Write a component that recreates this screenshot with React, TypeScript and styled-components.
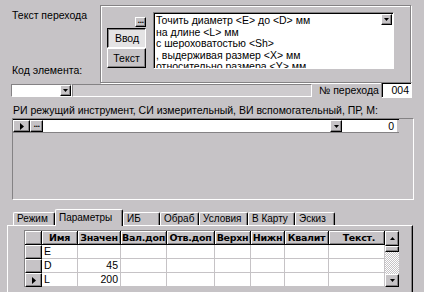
import React from "react";
import styled, { createGlobalStyle, css } from "styled-components";

const GRAY = "#c6c3c6";
const SHADOW = "#848284";
const FONT = `"Liberation Sans", Arial, sans-serif`;

const GlobalStyle = createGlobalStyle`
  html, body { margin: 0; padding: 0; background: ${GRAY}; }
  body { font-family: ${FONT}; font-size: 10.5px; }
`;

const raised = css`
  background: ${GRAY};
  border-top: 1px solid #fff;
  border-left: 1px solid #fff;
  border-right: 1px solid #000;
  border-bottom: 1px solid #000;
  box-shadow: inset -1px -1px 0 ${SHADOW};
`;

const sunken = css`
  border-top: 1px solid ${SHADOW};
  border-left: 1px solid ${SHADOW};
  border-right: 1px solid #fff;
  border-bottom: 1px solid #fff;
`;

const Screen = styled.div`
  width: 424px;
  height: 292px;
  overflow: hidden;
  background: ${GRAY};
  color: #000;
  display: flex;
  flex-direction: column;
  font-family: ${FONT};
  font-size: 10.5px;
  line-height: 13px;
`;

/* ---------- top area ---------- */
const TopArea = styled.div`
  display: flex;
  height: 83px;
  flex-shrink: 0;
`;

const LeftLabels = styled.div`
  width: 100px;
  box-sizing: border-box;
  padding: 9px 0 6px 12px;
  display: flex;
  flex-direction: column;
  justify-content: space-between;
  white-space: nowrap;
`;

const GroupPanel = styled.div`
  margin-top: 5px;
  width: 311px;
  height: 78px;
  box-sizing: border-box;
  border: 1px solid ${SHADOW};
  box-shadow: inset 1px 1px 0 #fff, 1px 1px 0 #fff;
  padding: 6px 0 0 6px;
  display: flex;
  align-items: flex-start;
`;

const ButtonsCol = styled.div`
  width: 39px;
  padding-top: 5px;
  display: flex;
  flex-direction: column;
  align-items: flex-end;
  gap: 1px;
`;

const ButtonStack = styled.div`
  display: flex;
  flex-direction: column;
`;

const DotsButton = styled.div<{ $w?: number; $h?: number }>`
  ${raised};
  box-sizing: border-box;
  width: ${(p) => p.$w ?? 11}px;
  height: ${(p) => p.$h ?? 10}px;
  display: flex;
  align-items: center;
  justify-content: center;
  font-family: "DejaVu Sans", sans-serif;
  font-size: 7px;
  font-weight: bold;
  line-height: 4px;
  letter-spacing: -0.6px;
  padding-bottom: 3px;
  overflow: hidden;
`;

const PushButton = styled.div<{ $down?: boolean }>`
  box-sizing: border-box;
  width: 39px;
  height: 20px;
  display: flex;
  align-items: center;
  justify-content: center;
  ${(p) =>
    p.$down
      ? css`
          background: #e4e3e4;
          border-top: 1px solid #000;
          border-left: 1px solid #000;
          border-right: 1px solid #fff;
          border-bottom: 1px solid #fff;
          box-shadow: inset 1px 1px 0 ${SHADOW};
          padding: 1px 0 0 1px;
        `
      : raised}
`;

const Memo = styled.div`
  margin-left: 7px;
  width: 241px;
  height: 57px;
  box-sizing: border-box;
  background: #fff;
  ${sunken};
  box-shadow: inset 1px 1px 0 #000;
  display: flex;
  overflow: hidden;
`;

const MemoText = styled.div`
  flex: 1;
  padding: 2px 0 0 2px;
  line-height: 11.6px;
  white-space: nowrap;
  overflow: hidden;
`;

const MemoSide = styled.div`
  width: 11px;
  padding: 1px 1px 0 0;
`;

const DropButton = styled.div<{ $w?: number; $h?: number }>`
  ${raised};
  box-sizing: border-box;
  width: ${(p) => p.$w ?? 11}px;
  height: ${(p) => p.$h ?? 11}px;
  display: flex;
  align-items: center;
  justify-content: center;
  flex-shrink: 0;
`;

/* ---------- row 2 ---------- */
const Row2 = styled.div`
  display: flex;
  align-items: center;
  height: 14px;
  padding: 0 12px 0 11px;
  flex-shrink: 0;
`;

const Combo = styled.div`
  width: 61px;
  height: 13px;
  box-sizing: border-box;
  background: #fff;
  ${sunken};
  display: flex;
  justify-content: flex-end;
`;

const GrayField = styled.div`
  width: 240px;
  height: 13px;
  box-sizing: border-box;
  ${sunken};
  background: #cecbce;
`;

const FieldLabel = styled.div`
  margin-left: 7px;
  white-space: nowrap;
`;

const NumBox = styled.div`
  margin-left: auto;
  width: 31px;
  height: 16px;
  box-sizing: border-box;
  background: #fff;
  ${sunken};
  box-shadow: inset 1px 1px 0 #000;
  text-align: right;
  padding: 1px 2px 0 0;
  line-height: 13px;
`;

/* ---------- tools ---------- */
const SectionLabel = styled.div`
  margin-top: 7px;
  padding-left: 13px;
  white-space: nowrap;
  flex-shrink: 0;
`;

const ToolPanel = styled.div`
  margin: 1px 0 0 12px;
  width: 402px;
  height: 82px;
  box-sizing: border-box;
  ${sunken};
  flex-shrink: 0;
`;

const ToolRow = styled.div`
  display: flex;
  height: 14px;
  box-sizing: border-box;
  border-top: 1px solid #000;
  border-bottom: 1px solid ${SHADOW};
  width: 386px;
`;

const IndicatorCell = styled.div<{ $w: number }>`
  ${raised};
  box-sizing: border-box;
  width: ${(p) => p.$w}px;
  height: 100%;
  display: flex;
  align-items: center;
  justify-content: center;
  flex-shrink: 0;
`;

const EditCell = styled.div<{ $w: number }>`
  width: ${(p) => p.$w}px;
  background: #fff;
  box-sizing: border-box;
  text-align: right;
  padding-right: 3px;
  line-height: 12px;
  flex-shrink: 0;
`;

/* ---------- tabs ---------- */
const TabsWrap = styled.div`
  margin: 9px 0 0 7px;
  width: 406px;
  flex: 1;
  display: flex;
  flex-direction: column;
`;

const TabStrip = styled.div`
  display: flex;
  align-items: flex-end;
  height: 16px;
  padding-left: 6px;
  flex-shrink: 0;
`;

const Tab = styled.div<{ $w: number; $active?: boolean }>`
  position: relative;
  box-sizing: border-box;
  width: ${(p) => p.$w}px;
  height: ${(p) => (p.$active ? 17 : 13)}px;
  margin-bottom: ${(p) => (p.$active ? -1 : 0)}px;
  z-index: ${(p) => (p.$active ? 1 : 0)};
  background: ${GRAY};
  border-top: 1px solid #fff;
  border-left: 1px solid #fff;
  border-right: 1px solid #000;
  box-shadow: inset -1px 0 0 ${SHADOW};
  border-radius: 2px 2px 0 0;
  padding: ${(p) => (p.$active ? "2px" : "0")} 0 0 3px;
  font-size: 10px;
  line-height: 11px;
  white-space: nowrap;
  overflow: hidden;
`;

const Page = styled.div`
  flex: 1;
  border-top: 1px solid #fff;
  border-left: 1px solid #fff;
  border-right: 1px solid #000;
  box-shadow: inset -1px 0 0 ${SHADOW};
  padding: 4px 0 0 16px;
`;

/* ---------- data grid ---------- */
const DataGrid = styled.div`
  width: 375px;
  height: 57px;
  box-sizing: border-box;
  border-top: 1px solid ${SHADOW};
  border-left: 1px solid ${SHADOW};
  display: flex;
  background: #fff;
`;

const GridBody = styled.div`
  display: grid;
  grid-template-columns: 17px 36px 43px 46px 48px 36px 34px 44px 56px;
  grid-template-rows: 14px 14px 14px 14px;
  width: 360px;
`;

const HeadCell = styled.div<{ $align?: string }>`
  box-sizing: border-box;
  background: ${GRAY};
  border-right: 1px solid #000;
  border-bottom: 1px solid #000;
  box-shadow: inset 1px 1px 0 #fff, inset -1px -1px 0 ${SHADOW};
  font-family: "DejaVu Sans", Verdana, sans-serif;
  font-weight: bold;
  font-size: 9.5px;
  line-height: 13px;
  text-align: ${(p) => p.$align ?? "center"};
  padding: 0 ${(p) => (p.$align === "right" ? "9px" : "0")} 0 0;
  white-space: nowrap;
  overflow: hidden;
  letter-spacing: -0.3px;
`;

const RowHead = styled.div`
  ${raised};
  box-sizing: border-box;
  display: flex;
  align-items: center;
  justify-content: center;
`;

const Cell = styled.div<{ $right?: boolean }>`
  box-sizing: border-box;
  background: #fff;
  border-right: 1px solid ${GRAY};
  border-bottom: 1px solid ${GRAY};
  text-align: ${(p) => (p.$right ? "right" : "left")};
  padding: 0 2px;
  line-height: 13px;
  white-space: nowrap;
  overflow: hidden;
`;

const ScrollBar = styled.div`
  width: 14px;
  display: flex;
  flex-direction: column;
`;

const ScrollTrack = styled.div`
  flex: 1;
  background: repeating-conic-gradient(#fff 0 25%, ${GRAY} 0 50%) 0 0 / 2px 2px;
`;

const Thumb = styled.div`
  ${raised};
  box-sizing: border-box;
  height: 6px;
`;

/* ---------- icons ---------- */
const DownArrow = () => (
  <svg width="5" height="3" viewBox="0 0 5 3">
    <path d="M0 0h5L2.5 3z" fill="#000" />
  </svg>
);
const UpArrow = () => (
  <svg width="5" height="3" viewBox="0 0 5 3">
    <path d="M0 3h5L2.5 0z" fill="#000" />
  </svg>
);
const RightArrow = () => (
  <svg width="4" height="7" viewBox="0 0 4 7">
    <path d="M0 0v7l4-3.5z" fill="#000" />
  </svg>
);

const headers: { t: string; align?: string }[] = [
  { t: "" },
  { t: "Имя" },
  { t: "Значен" },
  { t: "Вал.доп" },
  { t: "Отв.доп" },
  { t: "Верхн" },
  { t: "Нижн" },
  { t: "Квалит" },
  { t: "Текст.", align: "right" },
];

const rows = [
  { name: "E", value: "", current: false },
  { name: "D", value: "45", current: false },
  { name: "L", value: "200", current: true },
];

const tabs = [
  { t: "Режим", w: 42 },
  { t: "Параметры", w: 68, active: true },
  { t: "ИБ", w: 37 },
  { t: "Обраб", w: 39 },
  { t: "Условия", w: 49 },
  { t: "В Карту", w: 47 },
  { t: "Эскиз", w: 40 },
];

export default function App() {
  return (
    <>
      <GlobalStyle />
      <Screen>
        <TopArea>
          <LeftLabels>
            <div>Текст перехода</div>
            <div>Код элемента:</div>
          </LeftLabels>
          <GroupPanel>
            <ButtonsCol>
              <DotsButton>...</DotsButton>
              <ButtonStack>
                <PushButton $down>Ввод</PushButton>
                <PushButton>Текст</PushButton>
              </ButtonStack>
            </ButtonsCol>
            <Memo>
              <MemoText>
                <div>Точить диаметр &lt;E&gt; до &lt;D&gt; мм</div>
                <div>на длине &lt;L&gt; мм</div>
                <div>с шероховатостью &lt;Sh&gt;</div>
                <div>, выдерживая размер &lt;X&gt; мм</div>
                <div>относительно размера &lt;Y&gt; мм</div>
              </MemoText>
              <MemoSide>
                <DropButton>
                  <DownArrow />
                </DropButton>
              </MemoSide>
            </Memo>
          </GroupPanel>
        </TopArea>

        <Row2>
          <Combo>
            <DropButton $h={11}>
              <DownArrow />
            </DropButton>
          </Combo>
          <GrayField />
          <FieldLabel>№ перехода</FieldLabel>
          <NumBox>004</NumBox>
        </Row2>

        <SectionLabel>
          РИ режущий инструмент, СИ измерительный, ВИ вспомогательный, ПР, М:
        </SectionLabel>
        <ToolPanel>
          <ToolRow>
            <IndicatorCell $w={17}>
              <RightArrow />
            </IndicatorCell>
            <DotsButton $w={13} $h={12}>...</DotsButton>
            <EditCell $w={287} />
            <DropButton $w={12} $h={12}>
              <DownArrow />
            </DropButton>
            <EditCell $w={55}>0</EditCell>
          </ToolRow>
        </ToolPanel>

        <TabsWrap>
          <TabStrip>
            {tabs.map((t) => (
              <Tab key={t.t} $w={t.w} $active={t.active}>
                {t.t}
              </Tab>
            ))}
          </TabStrip>
          <Page>
            <DataGrid>
              <GridBody>
                {headers.map((h, i) => (
                  <HeadCell key={i} $align={h.align}>
                    {h.t}
                  </HeadCell>
                ))}
                {rows.map((r) => (
                  <React.Fragment key={r.name}>
                    <RowHead>{r.current && <RightArrow />}</RowHead>
                    <Cell>{r.name}</Cell>
                    <Cell $right>{r.value}</Cell>
                    <Cell />
                    <Cell />
                    <Cell />
                    <Cell />
                    <Cell />
                    <Cell />
                  </React.Fragment>
                ))}
              </GridBody>
              <ScrollBar>
                <DropButton $w={14} $h={15}>
                  <UpArrow />
                </DropButton>
                <Thumb />
                <ScrollTrack />
                <DropButton $w={14} $h={13}>
                  <DownArrow />
                </DropButton>
              </ScrollBar>
            </DataGrid>
          </Page>
        </TabsWrap>
      </Screen>
    </>
  );
}
